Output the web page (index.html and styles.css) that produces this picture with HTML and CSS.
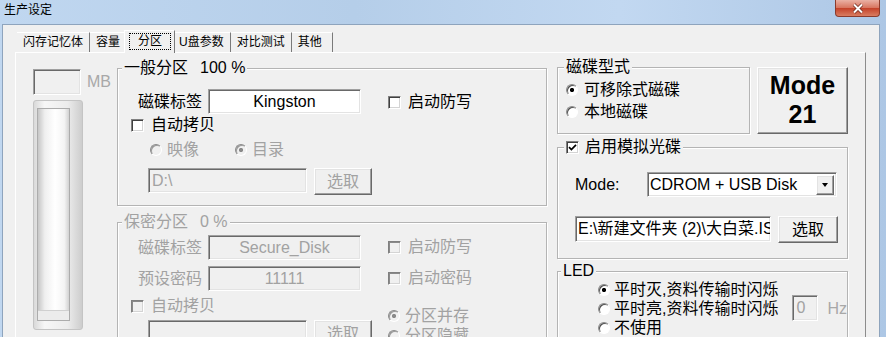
FILE: index.html
```html
<!DOCTYPE html>
<html lang="zh-CN">
<head>
  <meta charset="UTF-8">
  <meta name="viewport" content="width=device-width, initial-scale=1.0">
  <title>生产设定</title>
  <link rel="stylesheet" href="styles.css">
</head>
<body>

  <div class="window">
    <header class="titlebar">
      <span class="title">生产设定</span>
      <span class="close-btn">
        <svg width="14" height="11" viewBox="0 0 14 11">
          <path d="M3 1.5 L11 9.5 M11 1.5 L3 9.5" stroke="#6b2417" stroke-width="3.4" fill="none"/>
          <path d="M3 1.5 L11 9.5 M11 1.5 L3 9.5" stroke="#fff" stroke-width="2" fill="none"/>
        </svg>
      </span>
    </header>

    <div class="client">
      <!-- tab strip -->
      <div class="tabs">
        <span class="tab">闪存记忆体</span>
        <span class="tab">容量</span>
        <span class="tab active"><span class="focus">分区</span></span>
        <span class="tab">U盘参数</span>
        <span class="tab">对比测试</span>
        <span class="tab last">其他</span>
      </div>

      <div class="page">
        <!-- capacity meter -->
        <div class="meter-col">
          <div class="mb-row">
            <span class="edit off mb-box"></span>
            <span class="mb">MB</span>
          </div>
          <div class="meter"><div class="meter-well"></div></div>
        </div>

        <!-- partitions -->
        <div class="part-col">
          <div class="group part-main">
            <div class="caption">一般分区<span class="pct">100 %</span></div>
            <div class="part-left">
              <div class="field-row main-name">
                <span class="field-label">磁碟标签</span>
                <span class="edit name-box">Kingston</span>
              </div>
              <div class="check main-copy"><span class="cb"></span>自动拷贝</div>
              <div class="radio-row off">
                <span class="radio-item"><span class="rd"></span>映像</span>
                <span class="radio-item"><span class="rd on"></span>目录</span>
              </div>
              <div class="path-row main-path">
                <span class="edit off path-box">D:\</span>
                <span class="btn off pick-btn">选取</span>
              </div>
            </div>
            <div class="part-right">
              <div class="check main-protect"><span class="cb"></span>启动防写</div>
            </div>
          </div>

          <div class="group part-secure off">
            <div class="caption">保密分区<span class="pct">0 %</span></div>
            <div class="part-left">
              <div class="field-row sec-name">
                <span class="field-label">磁碟标签</span>
                <span class="edit off name-box">Secure_Disk</span>
              </div>
              <div class="field-row sec-pass">
                <span class="field-label">预设密码</span>
                <span class="edit off name-box">11111</span>
              </div>
              <div class="check sec-copy"><span class="cb"></span>自动拷贝</div>
              <div class="path-row sec-path">
                <span class="edit off path-box"></span>
                <span class="btn off pick-btn">选取</span>
              </div>
            </div>
            <div class="part-right">
              <div class="check sec-protect"><span class="cb"></span>启动防写</div>
              <div class="check sec-lock"><span class="cb"></span>启动密码</div>
              <div class="radio-item sec-both"><span class="rd on"></span>分区并存</div>
              <div class="radio-item"><span class="rd"></span>分区隐藏</div>
            </div>
          </div>
        </div>

        <!-- disk type, cdrom, led -->
        <div class="right-col">
          <div class="top-row">
            <div class="group disk-type">
              <div class="caption">磁碟型式</div>
              <div class="radio-item type-first"><span class="rd on"></span>可移除式磁碟</div>
              <div class="radio-item type-second"><span class="rd"></span>本地磁碟</div>
            </div>
            <div class="btn mode-btn">Mode<br>21</div>
          </div>

          <div class="group cdrom">
            <div class="caption check-caption">
              <span class="cb">
                <svg width="9" height="9" viewBox="0 0 9 9"><path d="M1 4.2 L3.4 6.6 L8 1.8" stroke="#000" stroke-width="1.7" fill="none"/></svg>
              </span>启用模拟光碟
            </div>
            <div class="mode-row">
              <span class="mode-label">Mode:</span>
              <span class="edit combo">
                <span class="combo-text">CDROM + USB Disk</span>
                <span class="btn drop"><span class="arrow"></span></span>
              </span>
            </div>
            <div class="file-row">
              <span class="edit file-box">E:\新建文件夹 (2)\大白菜.ISO</span>
              <span class="btn file-btn">选取</span>
            </div>
          </div>

          <div class="group led">
            <div class="caption">LED</div>
            <div class="led-list">
              <div class="radio-item"><span class="rd on"></span>平时灭,资料传输时闪烁</div>
              <div class="radio-item">
                <span class="rd"></span>平时亮,资料传输时闪烁
                <span class="edit off hz-box">0</span><span class="hz">Hz</span>
              </div>
              <div class="radio-item"><span class="rd"></span>不使用</div>
            </div>
          </div>
        </div>
      </div>
    </div>
  </div>

</body>
</html>
```

FILE: styles.css
```css
/* styles.css */
body {
    margin: 0;
    background: #b9d1ea;
    font-family: "Liberation Sans", "Noto Sans CJK SC", sans-serif;
    color: #000;
}

.window {
    width: 886px;
    height: 337px;
    overflow: hidden;
    display: flex;
    flex-direction: column;
    background: linear-gradient(to right, #c0d7f0, #b5cee9 40%, #c2d8f1 70%, #adc7e5);
}

/* title bar */
.titlebar {
    height: 24px;
    flex: none;
    display: flex;
    justify-content: space-between;
    align-items: flex-start;
}

.title {
    font-size: 12px;
    line-height: 20px;
    margin-left: 4px;
}

.close-btn {
    width: 45px;
    height: 17px;
    margin-right: 6px;
    box-sizing: border-box;
    border: 1px solid #8b3b2c;
    border-top: none;
    border-radius: 0 0 4px 4px;
    background: linear-gradient(#eab1a4, #d87660 48%, #c44229 52%, #d97d62);
    display: flex;
    align-items: center;
    justify-content: center;
}

/* client area */
.client {
    flex: 1;
    margin: 0 6px 0 2px;
    border: 1px solid #8ea4bd;
    border-bottom: none;
    background: #f0f0f0;
    overflow: hidden;
}

.tabs {
    display: flex;
    align-items: flex-end;
    height: 22px;
    margin: 5px 0 0 12px;
    padding-left: 2px;
}

.tab {
    height: 20px;
    box-sizing: border-box;
    padding: 0 6px;
    font-size: 12px;
    line-height: 19px;
    border-top: 1px solid #fff;
    border-right: 1px solid #7a7a7a;
    background: #f0f0f0;
}

.tab.last {
    padding-right: 10px;
}

.tab.active {
    position: relative;
    z-index: 1;
    height: 23px;
    margin: 0 -2px -1px -3px;
    padding: 2px 3px 0 4px;
    border-left: 1px solid #fff;
}

.focus {
    display: block;
    padding: 0 8px;
    line-height: 15px;
    border: 1px dotted #000;
}

.page {
    margin-left: 12px;
    width: 851px;
    height: 300px;
    box-sizing: border-box;
    border: 1px solid;
    border-color: #fff #8c8c8c #8c8c8c #fff;
    padding: 15px 0 0 17px;
    display: flex;
}

/* common controls */
.edit {
    box-sizing: border-box;
    height: 25px;
    border: 1px solid;
    border-color: #a0a0a0 #fff #fff #a0a0a0;
    box-shadow: inset 1px 1px 0 #696969, inset -1px -1px 0 #e3e3e3;
    background: #fff;
    font-size: 16px;
    line-height: 23px;
    padding: 0 3px;
    white-space: nowrap;
    overflow: hidden;
}

.edit.off,
.off .edit {
    background: #f0f0f0;
    color: #a2a2a2;
}

.btn {
    box-sizing: border-box;
    border: 1px solid;
    border-color: #fff #696969 #696969 #fff;
    box-shadow: inset -1px -1px 0 #a0a0a0, inset 1px 1px 0 #e3e3e3;
    background: #f0f0f0;
    font-size: 16px;
    text-align: center;
}

.btn.off {
    color: #a2a2a2;
}

.cb {
    width: 13px;
    height: 13px;
    flex: none;
    box-sizing: border-box;
    border: 1px solid;
    border-color: #808080 #fff #fff #808080;
    box-shadow: inset 1px 1px 0 #404040, inset -1px -1px 0 #d4d4d4;
    background: #fff;
    display: flex;
    align-items: center;
    justify-content: center;
}

.off .cb {
    background: #f0f0f0;
    box-shadow: inset 1px 1px 0 #8a8a8a, inset -1px -1px 0 #d4d4d4;
}

.rd {
    width: 12px;
    height: 12px;
    flex: none;
    box-sizing: border-box;
    border-radius: 50%;
    border: 1px solid;
    border-color: #8a8a8a #fff #fff #8a8a8a;
    box-shadow: inset 1px 1px 0 #505050;
    background: #fff;
}

.rd.on {
    background: radial-gradient(circle at 50% 50%, #000 1.8px, #fff 2.4px);
}

.off .rd {
    background: #f0f0f0;
    box-shadow: inset 1px 1px 0 #9a9a9a;
}

.off .rd.on {
    background: radial-gradient(circle at 50% 50%, #8a8a8a 1.8px, #f0f0f0 2.4px);
}

.check,
.radio-item {
    display: flex;
    align-items: center;
    height: 20px;
    font-size: 16px;
    line-height: 20px;
    white-space: nowrap;
}

.check {
    gap: 7px;
}

.radio-item {
    gap: 5px;
}

.off,
.off .check,
.off .radio-item,
.off .field-label,
.off .caption {
    color: #a2a2a2;
}

/* group boxes */
.group {
    position: relative;
    box-sizing: border-box;
    border: 1px solid #b4b4b4;
    box-shadow: inset 1px 1px 0 #fff, 1px 1px 0 #fff;
}

.caption {
    position: absolute;
    top: -10px;
    left: 4px;
    padding: 0 2px;
    background: #f0f0f0;
    font-size: 16px;
    line-height: 18px;
    white-space: nowrap;
}

.pct {
    margin-left: 12px;
}

/* meter column */
.meter-col {
    width: 84px;
    flex: none;
    padding-top: 1px;
}

.mb-row {
    display: flex;
    align-items: center;
    gap: 6px;
}

.mb-box {
    width: 48px;
    height: 26px;
}

.mb {
    font-size: 16px;
    color: #a8a8a8;
}

.meter {
    width: 50px;
    height: 230px;
    margin-top: 5px;
    box-sizing: border-box;
    border: 1px solid #c4c4c4;
    border-radius: 3px;
    padding: 7px 12px 8px 3px;
    background: linear-gradient(to right, #d9d9d9, #f7f7f7 22%, #ececec 70%, #cdcdcd);
}

.meter-well {
    height: 100%;
    box-sizing: border-box;
    border: 1px solid #acacac;
    background: linear-gradient(to right, #c6c6c6, #efefef 22%, #fff 55%, #f4f4f4 85%, #d2d2d2);
    box-shadow: inset 0 -9px 0 #ececec, inset 0 -10px 0 #d0d0d0;
}

/* partition column */
.part-col {
    width: 430px;
    flex: none;
    margin-right: 10px;
}

.part-main,
.part-secure {
    display: grid;
    grid-template-columns: 270px 1fr;
    align-items: start;
}

.part-main {
    height: 138px;
}

.part-secure {
    height: 130px;
    margin-top: 16px;
}

.part-left,
.part-right {
    display: flex;
    flex-direction: column;
    align-items: flex-start;
}

.field-row {
    display: flex;
    align-items: center;
    padding-left: 20px;
}

.field-label {
    width: 70px;
    font-size: 16px;
    line-height: 20px;
}

.name-box {
    width: 153px;
    text-align: center;
}

.path-row {
    display: flex;
    align-items: flex-start;
    gap: 7px;
    padding-left: 30px;
}

.path-box {
    width: 159px;
}

.pick-btn {
    width: 58px;
    height: 27px;
    line-height: 25px;
}

.radio-row {
    display: flex;
    padding-left: 32px;
}

.radio-row .radio-item {
    width: 85px;
}

.main-name { margin-top: 20px; }
.main-copy { margin-top: 1px; margin-left: 13px; }
.radio-row { margin-top: 5px; }
.main-path { margin-top: 8px; }
.main-protect { margin-top: 23px; }

.sec-name { margin-top: 12px; }
.sec-pass { margin-top: 6px; }
.sec-copy { margin-top: 5px; margin-left: 13px; }
.sec-path { margin-top: 4px; }
.sec-protect { margin-top: 14px; }
.sec-lock { margin-top: 11px; }
.sec-both { margin-top: 18px; }

/* right column */
.right-col {
    width: 291px;
    flex: none;
}

.top-row {
    display: flex;
    gap: 7px;
    margin-top: -1px;
}

.disk-type {
    width: 193px;
    height: 67px;
    padding-left: 8px;
}

.type-first { margin-top: 12px; gap: 6px; }
.type-second { margin-top: 2px; gap: 6px; }

.disk-type .caption {
    left: 6px;
}

.mode-btn {
    width: 91px;
    height: 67px;
    font-size: 25px;
    font-weight: bold;
    line-height: 29px;
    padding-top: 3px;
}

.cdrom {
    height: 112px;
    margin-top: 13px;
    padding-left: 17px;
}

.check-caption {
    left: 6px;
    display: flex;
    align-items: center;
    gap: 6px;
}

.mode-row {
    display: flex;
    align-items: center;
    margin-top: 24px;
}

.mode-label {
    width: 72px;
    font-size: 16px;
}

.combo {
    width: 190px;
    display: flex;
    justify-content: space-between;
    align-items: center;
    padding: 0 2px 0 2px;
}

.drop {
    width: 18px;
    height: 20px;
    display: flex;
    align-items: center;
    justify-content: center;
}

.arrow {
    width: 0;
    height: 0;
    border-left: 3.5px solid transparent;
    border-right: 3.5px solid transparent;
    border-top: 4px solid #000;
}

.file-row {
    display: flex;
    align-items: flex-start;
    gap: 7px;
    margin-top: 19px;
}

.file-box {
    width: 196px;
    height: 26px;
    padding: 0 2px;
}

.file-btn {
    width: 60px;
    height: 27px;
    line-height: 25px;
}

.led {
    height: 80px;
    margin-top: 12px;
    padding-left: 40px;
}

.led .caption {
    left: 3px;
}

.led-list {
    margin-top: 8px;
}

.led-list .radio-item {
    height: 19px;
    gap: 4px;
}

.hz-box {
    width: 27px;
    height: 26px;
    margin: -4px 0 -3px 10px;
    line-height: 24px;
}

.hz {
    margin-left: 5px;
    color: #a8a8a8;
}
```
